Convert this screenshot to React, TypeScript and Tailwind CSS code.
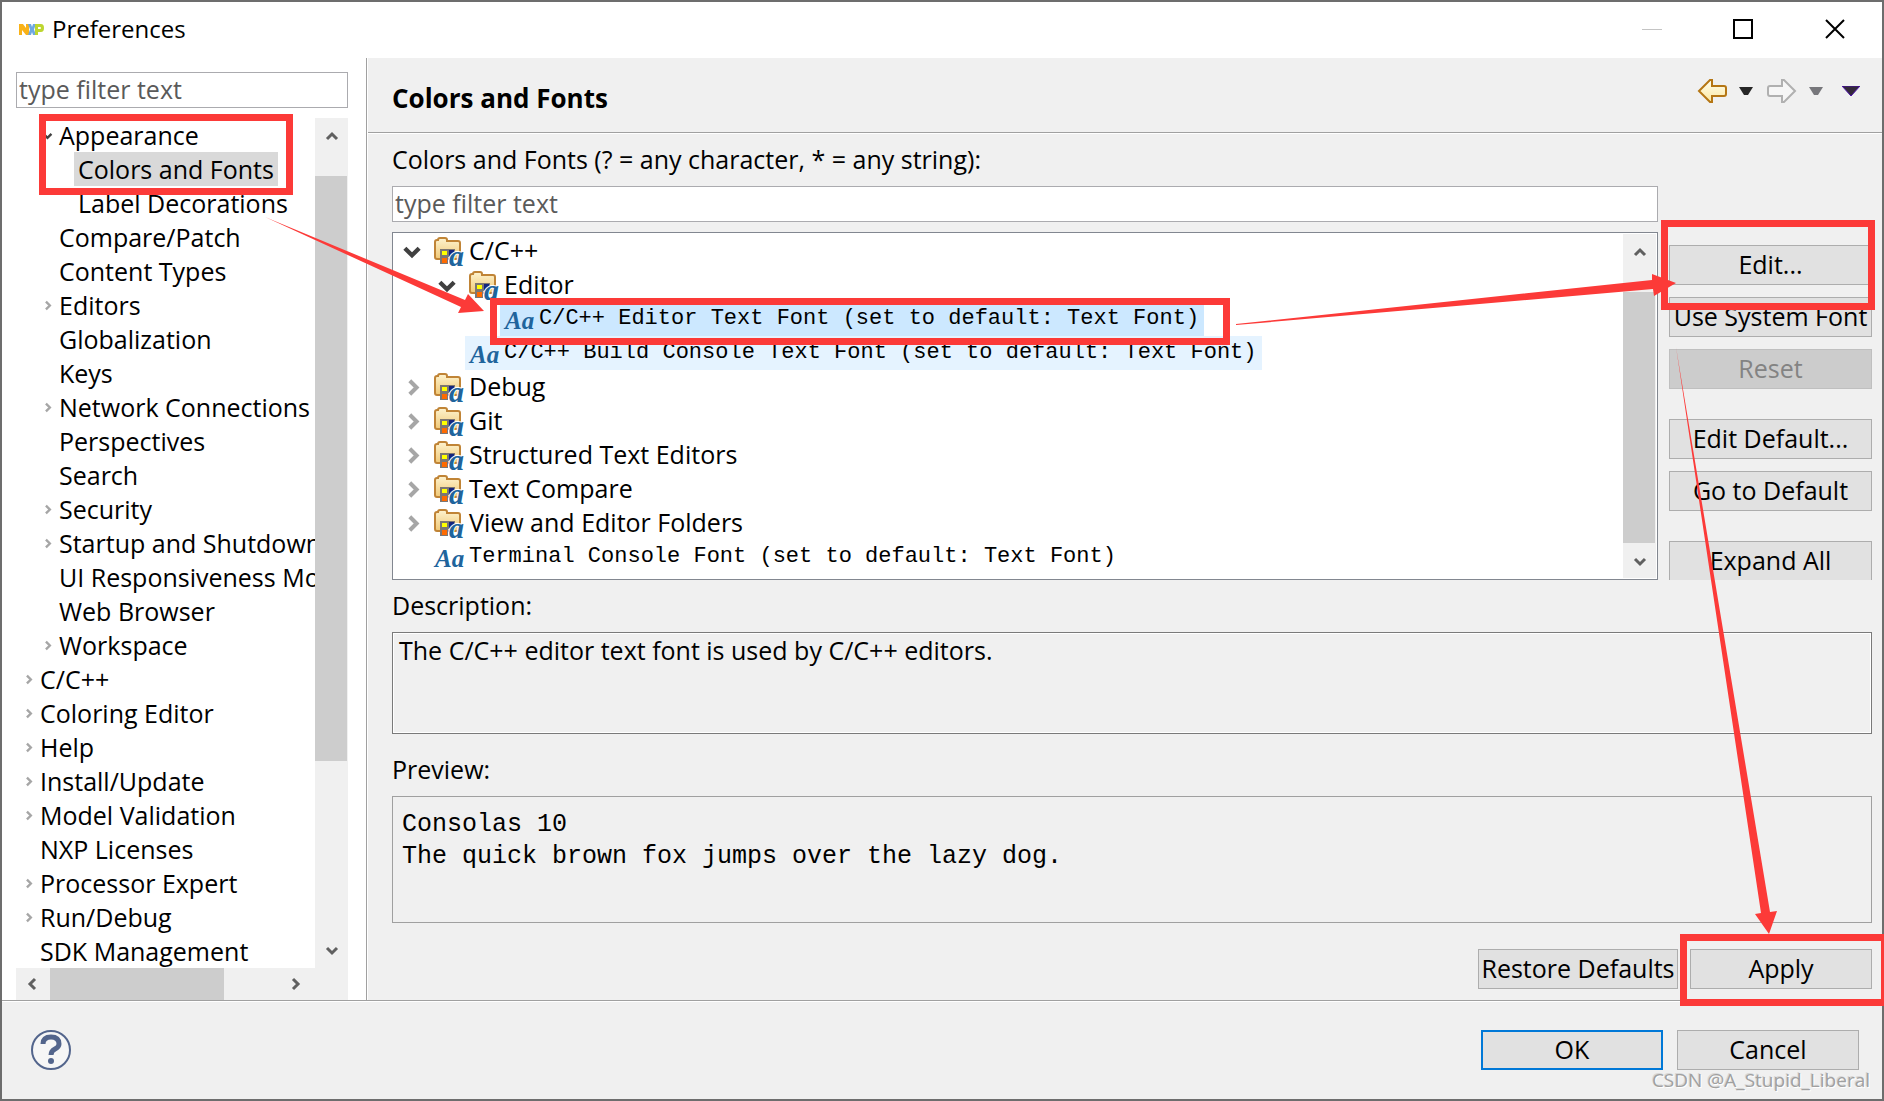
import React, { useState } from 'react';
import clsx from 'clsx';

interface NavItem {
  label: string;
  level: number;
  state?: 'open' | 'closed';
}

interface FontItem {
  label: string;
  level: number;
  kind: 'folder' | 'font';
  state?: 'open' | 'closed';
}

const navItems: NavItem[] = [
  { label: 'Appearance', level: 1, state: 'open' },
  { label: 'Colors and Fonts', level: 2 },
  { label: 'Label Decorations', level: 2 },
  { label: 'Compare/Patch', level: 1 },
  { label: 'Content Types', level: 1 },
  { label: 'Editors', level: 1, state: 'closed' },
  { label: 'Globalization', level: 1 },
  { label: 'Keys', level: 1 },
  { label: 'Network Connections', level: 1, state: 'closed' },
  { label: 'Perspectives', level: 1 },
  { label: 'Search', level: 1 },
  { label: 'Security', level: 1, state: 'closed' },
  { label: 'Startup and Shutdown', level: 1, state: 'closed' },
  { label: 'UI Responsiveness Mo', level: 1 },
  { label: 'Web Browser', level: 1 },
  { label: 'Workspace', level: 1, state: 'closed' },
  { label: 'C/C++', level: 0, state: 'closed' },
  { label: 'Coloring Editor', level: 0, state: 'closed' },
  { label: 'Help', level: 0, state: 'closed' },
  { label: 'Install/Update', level: 0, state: 'closed' },
  { label: 'Model Validation', level: 0, state: 'closed' },
  { label: 'NXP Licenses', level: 0 },
  { label: 'Processor Expert', level: 0, state: 'closed' },
  { label: 'Run/Debug', level: 0, state: 'closed' },
  { label: 'SDK Management', level: 0 },
];

const fontItems: FontItem[] = [
  { label: 'C/C++', level: 0, kind: 'folder', state: 'open' },
  { label: 'Editor', level: 1, kind: 'folder', state: 'open' },
  { label: 'C/C++ Editor Text Font (set to default: Text Font)', level: 2, kind: 'font' },
  { label: 'C/C++ Build Console Text Font (set to default: Text Font)', level: 1, kind: 'font' },
  { label: 'Debug', level: 0, kind: 'folder', state: 'closed' },
  { label: 'Git', level: 0, kind: 'folder', state: 'closed' },
  { label: 'Structured Text Editors', level: 0, kind: 'folder', state: 'closed' },
  { label: 'Text Compare', level: 0, kind: 'folder', state: 'closed' },
  { label: 'View and Editor Folders', level: 0, kind: 'folder', state: 'closed' },
  { label: 'Terminal Console Font (set to default: Text Font)', level: 0, kind: 'font' },
];

const navIndent = ['pl-[5px]', 'pl-[24px]', 'pl-[43px]'];
const fontIndent = ['pl-0', 'pl-[35px]', 'pl-[70px]'];

const chevrons = {
  up: 'M2 9 L7 4 L12 9',
  down: 'M2 5 L7 10 L12 5',
  left: 'M9 2 L4 7 L9 12',
  right: 'M5 2 L10 7 L5 12',
};

function Chevron({ dir, size, color, width }: { dir: keyof typeof chevrons; size: number; color: string; width: number }) {
  return (
    <svg width={size} height={size} viewBox="0 0 14 14" fill="none" stroke={color} strokeWidth={width} aria-hidden="true">
      <path d={chevrons[dir]} />
    </svg>
  );
}

function NxpLogo() {
  return (
    <svg width="25" height="11" viewBox="0 0 25 11" aria-hidden="true">
      <path d="M0 0H4L7 4V0H10V11H7L3 6V11H0Z" fill="#f9b218" />
      <path d="M9 0H12L13 3L14 0H17L15 5.500L17 11H14L13 8L12 11H9L11 5.500Z" fill="#6fa8e0" />
      <path d="M16 0H22Q25 0 25 4Q25 8 22 8H19V11H16ZM19 3V5H21Q22 5 22 4Q22 3 21 3Z" fill="#bdd630" fillRule="evenodd" />
    </svg>
  );
}

function FolderIcon() {
  return (
    <svg className="overflow-visible" width="30" height="30" viewBox="0 0 30 30" aria-hidden="true">
      <defs>
        <linearGradient id="folder" x1="0" y1="0" x2="0" y2="1">
          <stop offset="0" stopColor="#fdf3cf" />
          <stop offset="1" stopColor="#f0c876" />
        </linearGradient>
      </defs>
      <path d="M1 21V6Q1 4 3 4H4Q4 2 6 2H11Q13 2 13 4V5H24Q26 5 26 7V21Q26 23 24 23H3Q1 23 1 21Z" fill="url(#folder)" stroke="#c08436" strokeWidth="2" />
      <path d="M6 13H21V21H14V28H6Z" fill="#7c7672" />
      <rect x="8" y="15" width="5" height="4" fill="#ffff00" />
      <rect x="15" y="14" width="5" height="6" fill="#15247c" />
      <rect x="8" y="22" width="5" height="5" fill="#ff6a00" />
      <text x="15" y="30" fontFamily="'Liberation Serif', serif" fontSize="30" fontStyle="italic" fontWeight="700" fill="#20649c" stroke="#fff" strokeWidth="2" paintOrder="stroke">a</text>
    </svg>
  );
}

function FontIcon() {
  return (
    <svg className="overflow-visible" width="30" height="22" viewBox="0 0 30 22" aria-hidden="true">
      <text x="1" y="21" fontFamily="'Liberation Serif', serif" fontSize="25" fontStyle="italic" fontWeight="700" fill="#20649c">Aa</text>
    </svg>
  );
}

function ArrowIcon({ back }: { back?: boolean }) {
  return (
    <svg width="30" height="26" viewBox="0 0 30 26" aria-hidden="true">
      <defs>
        <linearGradient id="gold" x1="0" y1="0" x2="0" y2="1">
          <stop offset="0" stopColor="#fffef0" />
          <stop offset="1" stopColor="#fbe7a0" />
        </linearGradient>
      </defs>
      {back ? (
        <path d="M2 13L13 2H15V8H27Q29 8 29 10V16Q29 18 27 18H15V24H13Z" fill="url(#gold)" stroke="#b57614" strokeWidth="2" />
      ) : (
        <path d="M28 13L17 2H15V8H3Q1 8 1 10V16Q1 18 3 18H15V24H17Z" fill="#f6f6f6" stroke="#b0b0b0" strokeWidth="2" />
      )}
    </svg>
  );
}

function Caret({ color, edge }: { color: string; edge?: string }) {
  return (
    <svg width="18" height="10" viewBox="0 0 18 10" aria-hidden="true">
      {edge ? <path d="M0 0H18L9 10Z" fill={color} stroke={edge} strokeWidth="1" /> : <path d="M2 1H16L11 9H7Z" fill={color} />}
    </svg>
  );
}

function HelpIcon() {
  return (
    <svg width="40" height="40" viewBox="0 0 40 40" aria-hidden="true">
      <circle cx="20" cy="20" r="19" fill="#f6f6f6" stroke="#53658c" strokeWidth="2" />
      <path d="M12 14Q12 7 20 7Q28 7 28 14Q28 17 24 19Q20 21 20 25" fill="none" stroke="#53658c" strokeWidth="5" />
      <circle cx="20" cy="31" r="3" fill="#53658c" />
    </svg>
  );
}

interface DialogButtonProps {
  className?: string;
  children: React.ReactNode;
  disabled?: boolean;
  primary?: boolean;
}

function DialogButton({ className, children, disabled, primary }: DialogButtonProps) {
  return (
    <button
      type="button"
      disabled={disabled}
      className={clsx(
        'flex h-[40px] shrink-0 items-center justify-center pb-[2px] whitespace-nowrap',
        primary ? 'border-2 border-[#0078d7]' : disabled ? 'border border-[#bfbfbf]' : 'border border-[#adadad]',
        disabled ? 'bg-[#cccccc] text-[#838383]' : 'bg-[#e1e1e1]',
        className
      )}
    >
      {children}
    </button>
  );
}

function VerticalScrollbar({ thumb }: { thumb: string }) {
  return (
    <div className="flex w-[33px] shrink-0 flex-col items-center bg-[#f0f0f0]">
      <button type="button" aria-label="Scroll up" className="flex h-[38px] shrink-0 items-center justify-center">
        <Chevron dir="up" size={14} color="#606060" width={3} />
      </button>
      <div className="flex w-full flex-1 flex-col pt-[20px] pr-px">
        <div className={clsx('w-full bg-[#cdcdcd]', thumb)} />
      </div>
      <button type="button" aria-label="Scroll down" className="flex h-[36px] shrink-0 items-center justify-center">
        <Chevron dir="down" size={14} color="#606060" width={3} />
      </button>
    </div>
  );
}

function Sidebar() {
  const [selected, setSelected] = useState('Colors and Fonts');

  return (
    <aside className="flex w-[365px] shrink-0 flex-col border-r border-[#a0a0a0] bg-white pt-[14px] pr-[18px] pl-[14px]">
      <input
        type="text"
        aria-label="Filter preferences"
        placeholder="type filter text"
        className="mb-[10px] h-[36px] w-full border border-[#ababaf] px-[2px] pb-[2px] outline-none placeholder:text-[#5a5a5a]"
      />
      <div className="flex flex-1">
        <ul className="min-w-0 flex-1 overflow-hidden">
          {navItems.map(item => (
            <li key={item.label} className={clsx('flex h-[34px] items-center', navIndent[item.level])}>
              <span className="mr-px flex w-[14px] shrink-0 items-center justify-center">
                {item.state === 'closed' && <Chevron dir="right" size={11} color="#a6a6a6" width={3} />}
                {item.state === 'open' && <Chevron dir="down" size={11} color="#404040" width={3} />}
              </span>
              <button
                type="button"
                onClick={() => setSelected(item.label)}
                className={clsx('h-full shrink-0 px-[4px] pb-[2px] whitespace-nowrap', selected === item.label && 'bg-[#d9d9d9]')}
              >
                {item.label}
              </button>
            </li>
          ))}
        </ul>
        <VerticalScrollbar thumb="h-[585px]" />
      </div>
      <div className="flex h-[32px] items-center bg-[#f0f0f0] pr-[35px]">
        <button type="button" aria-label="Scroll left" className="flex w-[34px] justify-center">
          <Chevron dir="left" size={14} color="#606060" width={3} />
        </button>
        <div className="h-full flex-1">
          <div className="h-full w-[174px] bg-[#cdcdcd]" />
        </div>
        <button type="button" aria-label="Scroll right" className="flex w-[36px] justify-center">
          <Chevron dir="right" size={14} color="#606060" width={3} />
        </button>
      </div>
    </aside>
  );
}

function FontTree() {
  const [selected, setSelected] = useState(fontItems[2].label);

  return (
    <div className="flex min-w-0 flex-1 border border-[#828790] bg-white p-px">
      <ul className="min-w-0 flex-1 overflow-hidden">
        {fontItems.map(item => (
          <li key={item.label} className={clsx('flex h-[34px] items-center', fontIndent[item.level])}>
            <span className="flex w-[36px] shrink-0 justify-center">
              {item.state === 'closed' && <Chevron dir="right" size={19} color="#a6a6a6" width={3} />}
              {item.state === 'open' && <Chevron dir="down" size={20} color="#404040" width={3} />}
            </span>
            <button
              type="button"
              onClick={() => setSelected(item.label)}
              className={clsx(
                'flex h-full shrink-0 items-center gap-[5px] pr-[5px] pl-[4px] whitespace-nowrap',
                selected === item.label && 'bg-[#cce8ff]',
                item.label.includes('Build Console') && 'bg-[#e5f3ff]'
              )}
            >
              {item.kind === 'folder' ? <FolderIcon /> : <FontIcon />}
              <span className={clsx(item.kind === 'font' ? "font-['Liberation_Mono',monospace] text-[22px]" : 'pb-[2px]')}>
                {item.label}
              </span>
            </button>
          </li>
        ))}
      </ul>
      <VerticalScrollbar thumb="h-[251px]" />
    </div>
  );
}

function PreferencePage() {
  return (
    <main className="flex min-w-0 flex-1 flex-col border-l border-white">
      <header className="flex h-[75px] shrink-0 items-center justify-between border-b border-[#a0a0a0] pr-[22px] pb-[8px] pl-[24px] shadow-[0_1px_0_#fff]">
        <h1 className="pt-[14px] text-[26px] font-bold">Colors and Fonts</h1>
        <div className="flex items-center">
          <button type="button" aria-label="Back"><ArrowIcon back /></button>
          <button type="button" aria-label="Back history" className="ml-[10px]"><Caret color="#262626" /></button>
          <button type="button" aria-label="Forward" className="ml-[12px]"><ArrowIcon /></button>
          <button type="button" aria-label="Forward history" className="ml-[10px]"><Caret color="#77777b" /></button>
          <button type="button" aria-label="View menu" className="ml-[17px]"><Caret color="#33293a" edge="#4b0fa8" /></button>
        </div>
      </header>
      <div className="flex flex-1 flex-col pr-[10px] pl-[24px]">
        <label htmlFor="font-filter" className="mt-[9px] h-[34px]">Colors and Fonts (? = any character, * = any string):</label>
        <div className="mt-[10px] flex gap-[11px]">
          <div className="flex min-w-0 flex-1 flex-col gap-[10px]">
            <input
              id="font-filter"
              type="text"
              placeholder="type filter text"
              className="h-[36px] w-full border border-[#ababaf] bg-white px-[2px] pb-[2px] outline-none placeholder:text-[#5a5a5a]"
            />
            <div className="flex h-[348px]"><FontTree /></div>
          </div>
          <div className="flex h-[394px] w-[203px] shrink-0 flex-col gap-[12px] overflow-hidden pt-[59px]">
            <DialogButton>Edit...</DialogButton>
            <DialogButton>Use System Font</DialogButton>
            <DialogButton disabled>Reset</DialogButton>
            <DialogButton className="mt-[18px]">Edit Default...</DialogButton>
            <DialogButton>Go to Default</DialogButton>
            <DialogButton className="mt-[18px]">Expand All</DialogButton>
          </div>
        </div>
        <label htmlFor="description" className="mt-[8px] h-[34px]">Description:</label>
        <textarea
          id="description"
          readOnly
          value="The C/C++ editor text font is used by C/C++ editors."
          className="mt-[10px] h-[102px] resize-none border border-[#7a7a7a] px-[6px] shadow-[inset_0_0_0_1px_#fff] outline-none"
        />
        <h2 className="mt-[18px] h-[34px]">Preview:</h2>
        <div className="mt-[10px] min-h-[127px] border border-[#a0a0a0] px-[9px] py-[12px] font-['Liberation_Mono',monospace] leading-[32px]">
          <p>Consolas 10</p>
          <p>The quick brown fox jumps over the lazy dog.</p>
        </div>
        <div className="mt-[26px] flex justify-end gap-[12px]">
          <DialogButton className="w-[200px]">Restore Defaults</DialogButton>
          <DialogButton className="w-[182px]">Apply</DialogButton>
        </div>
      </div>
    </main>
  );
}

// Red marks drawn over the dialog
function Annotations() {
  return (
    <div className="pointer-events-none absolute -inset-[2px] overflow-hidden">
      <div className="absolute top-[114px] left-[39px] h-[81px] w-[254px] border-[7px] border-[#fc3a38]" />
      <div className="absolute top-[298px] left-[490px] h-[47px] w-[740px] border-[7px] border-[#fc3a38]" />
      <div className="absolute top-[220px] right-[9px] h-[90px] w-[214px] border-[7px] border-[#fc3a38]" />
      <div className="absolute top-[934px] right-[-4px] h-[72px] w-[208px] border-[7px] border-[#fc3a38]" />
      <svg className="absolute top-0 left-0" width="1884" height="1101" viewBox="0 0 1884 1101" fill="#fc3a38" aria-hidden="true">
        <path d="M265 217L465 300L468 294L484 311L458 313L461 307Z" />
        <path d="M1236 324L1652 280L1652 274L1676 283L1654 296L1653 289L1236 325Z" />
        <path d="M1676 347L1770 912L1777 911L1769 934L1755 914L1761 913Z" />
      </svg>
      <span className="absolute right-[14px] bottom-[7px] text-[19px] leading-[28px] text-[#a0a0a0] [text-shadow:1px_1px_0_#fff,-1px_-1px_0_#d8d8d8]">
        CSDN @A_Stupid_Liberal
      </span>
    </div>
  );
}

export default function App() {
  return (
    <div className="relative flex min-h-screen flex-col border-2 border-[#6d6d6d] bg-[#f0f0f0] font-['Open_Sans','Noto_Sans',sans-serif] text-[25px] leading-[34px] text-black">
      <div className="flex h-[56px] shrink-0 items-center bg-white pr-[36px] pb-[2px] pl-[17px]">
        <NxpLogo />
        <span className="ml-[8px] flex-1 text-[24px]">Preferences</span>
        <div className="flex items-center gap-[70px]">
          <button type="button" aria-label="Minimize">
            <svg width="20" height="20" viewBox="0 0 20 20" stroke="#c4c4c4"><path d="M0 10.500H20" /></svg>
          </button>
          <button type="button" aria-label="Maximize">
            <svg width="22" height="22" viewBox="0 0 22 22" fill="none" stroke="#000" strokeWidth="2"><path d="M2 2H20V20H2Z" /></svg>
          </button>
          <button type="button" aria-label="Close">
            <svg width="22" height="22" viewBox="0 0 22 22" stroke="#000" strokeWidth="2"><path d="M2 2L20 20M20 2L2 20" /></svg>
          </button>
        </div>
      </div>
      <div className="flex flex-1">
        <Sidebar />
        <PreferencePage />
      </div>
      <footer className="flex h-[99px] shrink-0 items-center border-t border-[#a0a0a0] pr-[23px] pl-[29px] shadow-[inset_0_1px_0_#fff]">
        <button type="button" aria-label="Help"><HelpIcon /></button>
        <div className="ml-auto flex gap-[14px]">
          <DialogButton className="w-[182px]" primary>OK</DialogButton>
          <DialogButton className="w-[182px]">Cancel</DialogButton>
        </div>
      </footer>
      <Annotations />
    </div>
  );
}
